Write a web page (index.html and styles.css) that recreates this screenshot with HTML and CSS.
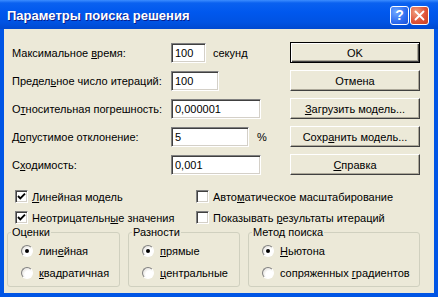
FILE: index.html
```html
<!DOCTYPE html>
<html lang="ru">
<head>
  <meta charset="UTF-8">
  <title>Параметры поиска решения</title>
  <link rel="stylesheet" href="styles.css">
</head>
<body>
  <div class="window">
    <div class="titlebar">
      <div class="title">Параметры поиска решения</div>
      <div class="title-buttons">
        <div class="tb-btn tb-help">?</div>
        <div class="tb-btn tb-close">
          <svg width="11" height="11" viewBox="0 0 11 11"><path d="M1.5 1.5 L9.5 9.5 M9.5 1.5 L1.5 9.5" stroke="#fff" stroke-width="1.8" stroke-linecap="round"/></svg>
        </div>
      </div>
    </div>

    <div class="client">
      <div class="top">
        <div class="form">
          <div class="lbl">Максимальное <u>в</u>ремя:</div>
          <div class="field"><input class="edit w-sm" value="100"><span class="suffix">секунд</span></div>

          <div class="lbl">Предел<u>ь</u>ное число итераций:</div>
          <div class="field"><input class="edit w-md" value="100"></div>

          <div class="lbl">О<u>т</u>носительная погрешность:</div>
          <div class="field"><input class="edit w-lg" value="0,000001"></div>

          <div class="lbl">Д<u>о</u>пустимое отклонение:</div>
          <div class="field"><input class="edit w-pct" value="5"><span class="suffix pct">%</span></div>

          <div class="lbl">С<u>х</u>одимость:</div>
          <div class="field"><input class="edit w-lg" value="0,001"></div>
        </div>

        <div class="buttons">
          <div class="btn default">OK</div>
          <div class="btn">Отмена</div>
          <div class="btn"><span><u>З</u>агрузить модель...</span></div>
          <div class="btn"><span>Сохр<u>а</u>нить модель...</span></div>
          <div class="btn"><span><u>С</u>правка</span></div>
        </div>
      </div>

      <div class="checks">
        <div class="check"><span class="box"><svg width="9" height="9" viewBox="0 0 9 9"><path d="M1 4 L3.3 6.3 L8 1.6" stroke="#000" stroke-width="1.9" fill="none"/></svg></span><span><u>Л</u>инейная модель</span></div>
        <div class="check"><span class="box"></span><span>Авто<u>м</u>атическое масштабирование</span></div>
        <div class="check"><span class="box"><svg width="9" height="9" viewBox="0 0 9 9"><path d="M1 4 L3.3 6.3 L8 1.6" stroke="#000" stroke-width="1.9" fill="none"/></svg></span><span>Неотрицательн<u>ы</u>е значения</span></div>
        <div class="check"><span class="box"></span><span>Показывать <u>р</u>езультаты итераций</span></div>
      </div>

      <div class="groups">
        <fieldset class="group g-est">
          <legend>Оценки</legend>
          <div class="radio"><span class="dot on"></span><span>лин<u>е</u>йная</span></div>
          <div class="radio"><span class="dot"></span><span><u>к</u>вадратичная</span></div>
        </fieldset>
        <fieldset class="group g-diff">
          <legend>Разности</legend>
          <div class="radio"><span class="dot on"></span><span><u>п</u>рямые</span></div>
          <div class="radio"><span class="dot"></span><span><u>ц</u>ентральные</span></div>
        </fieldset>
        <fieldset class="group g-method">
          <legend>Метод поиска</legend>
          <div class="radio"><span class="dot on"></span><span><u>Н</u>ьютона</span></div>
          <div class="radio"><span class="dot"></span><span>сопряженных <u>г</u>радиентов</span></div>
        </fieldset>
      </div>
    </div>
  </div>
</body>
</html>
```

FILE: styles.css
```css
body {
  margin: 0;
  font-family: "Liberation Sans", Arial, sans-serif;
  font-size: 11px;
  color: #000;
}

.window {
  width: 438px;
  height: 297px;
  background: #0055E5;
  display: flex;
  flex-direction: column;
}

.titlebar {
  height: 29px;
  flex-shrink: 0;
  display: flex;
  align-items: center;
  justify-content: space-between;
  padding: 1px 9px 0 7px;
  box-sizing: border-box;
  background: linear-gradient(#3C8DFF 0, #0A61F0 3px, #0058EE 12px, #0053E3 22px, #0049D0 29px);
}

.title {
  color: #fff;
  font-weight: bold;
  font-size: 13px;
  text-shadow: 1px 1px #0A1E8C;
}

.title-buttons {
  display: flex;
  gap: 1px;
}

.tb-btn {
  width: 17px;
  height: 17px;
  border: 1px solid #fff;
  border-radius: 3px;
  display: flex;
  align-items: center;
  justify-content: center;
  color: #fff;
  font-weight: bold;
  font-size: 14px;
}

.tb-help {
  background: radial-gradient(circle at 30% 30%, #6FA8FF, #2D6CF0 60%, #1A4FD8);
}

.tb-close {
  background: radial-gradient(circle at 30% 30%, #F0A080, #E0553A 55%, #C8401F);
}

.client {
  flex: 1;
  margin: 0 4px 4px;
  background: #ECE9D8;
}

.top {
  display: flex;
  justify-content: space-between;
  padding: 14px 14px 0 8px;
}

.form {
  display: grid;
  grid-template-columns: 159px auto;
  grid-auto-rows: 20px;
  row-gap: 8px;
  align-items: center;
}

.field {
  display: flex;
  align-items: center;
  height: 20px;
}

.edit {
  box-sizing: border-box;
  height: 20px;
  margin: 0;
  padding: 0 3px;
  font: inherit;
  color: #000;
  background: #fff;
  border: 1px solid;
  border-color: #808080 #fff #fff #808080;
  box-shadow: inset 1px 1px #404040, inset -1px -1px #D4D0C8;
  outline: none;
}

.w-sm { width: 35px; }
.w-md { width: 48px; }
.w-lg { width: 90px; }
.w-pct { width: 78px; }

.suffix {
  margin-left: 7px;
}

.suffix.pct {
  margin-left: 8px;
}

.buttons {
  display: flex;
  flex-direction: column;
  gap: 7px;
  margin-top: -1px;
}

.btn {
  box-sizing: border-box;
  width: 130px;
  height: 21px;
  display: flex;
  align-items: center;
  justify-content: center;
  background: #ECE9D8;
  border: 1px solid;
  border-color: #fff #404040 #404040 #fff;
  box-shadow: inset -1px -1px #ACA899;
}

.btn.default {
  border-color: #000;
  box-shadow: inset 1px 1px #fff, inset -1px -1px #404040, inset -2px -2px #ACA899;
}

.checks {
  display: grid;
  grid-template-columns: 181px auto;
  grid-auto-rows: 21px;
  padding: 11px 0 0 11px;
}

.check {
  display: flex;
  align-items: center;
}

.box {
  box-sizing: border-box;
  width: 13px;
  height: 13px;
  margin-right: 4px;
  background: #fff;
  border: 1px solid;
  border-color: #808080 #fff #fff #808080;
  box-shadow: inset 1px 1px #404040, inset -1px -1px #D4D0C8;
  display: flex;
  align-items: center;
  justify-content: center;
}

.groups {
  display: flex;
  gap: 8px;
  padding: 0 14px 0 3px;
  margin-top: -2px;
}

.group {
  margin: 0;
  padding: 2px 0 0;
  height: 61px;
  box-sizing: border-box;
  border: 1px solid #D0D0BF;
  border-radius: 3px;
}

.g-est { width: 113px; }
.g-diff { width: 112px; }
.g-method { width: 172px; }

.group legend {
  margin-left: 3px;
  padding: 0 1px;
}

.radio {
  display: flex;
  align-items: center;
  height: 22px;
  padding-left: 13px;
}

.dot {
  box-sizing: border-box;
  width: 12px;
  height: 12px;
  margin-right: 6px;
  border-radius: 50%;
  background: radial-gradient(circle at 65% 65%, #fff 40%, #D4D0C8);
  border: 1px solid;
  border-color: #808080 #fff #fff #808080;
  display: flex;
  align-items: center;
  justify-content: center;
}

.dot.on::after {
  content: "";
  width: 4px;
  height: 4px;
  border-radius: 50%;
  background: #000;
}
```
